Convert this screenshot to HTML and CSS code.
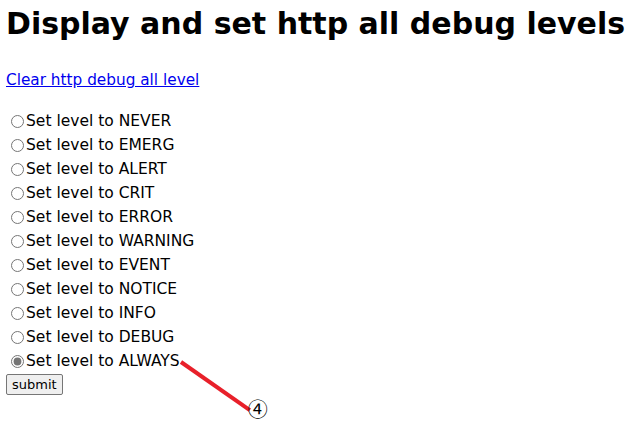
FILE: index.html
```html
<!DOCTYPE html>
<html lang="en">

<head>
  <meta charset="UTF-8">
  <title>Display and set http all debug levels</title>
  <link rel="stylesheet" href="styles.css">
</head>

<body>
  <h1>Display and set http all debug levels</h1>

  <p class="clear"><a href="#">Clear http debug all level</a></p>

  <form class="levels">
    <label class="level"><input type="radio" name="level" value="never">Set level to NEVER</label>
    <label class="level"><input type="radio" name="level" value="emerg">Set level to EMERG</label>
    <label class="level"><input type="radio" name="level" value="alert">Set level to ALERT</label>
    <label class="level"><input type="radio" name="level" value="crit">Set level to CRIT</label>
    <label class="level"><input type="radio" name="level" value="error">Set level to ERROR</label>
    <label class="level"><input type="radio" name="level" value="warning">Set level to WARNING</label>
    <label class="level"><input type="radio" name="level" value="event">Set level to EVENT</label>
    <label class="level"><input type="radio" name="level" value="notice">Set level to NOTICE</label>
    <label class="level"><input type="radio" name="level" value="info">Set level to INFO</label>
    <label class="level"><input type="radio" name="level" value="debug">Set level to DEBUG</label>
    <label class="level">
      <input type="radio" name="level" value="always" checked>Set level to ALWAYS
      <span class="callout">
        <span class="callout-line"></span>
        <span class="callout-num">④</span>
      </span>
    </label>
    <div><button type="button" class="submit">submit</button></div>
  </form>
</body>

</html>
```

FILE: styles.css
```css
* {
  box-sizing: border-box
}

html {
  min-height: 100%
}

body {
  margin: 8px 6px;
  min-height: 421px;
  font-family: "DejaVu Sans", Verdana, sans-serif;
  color: #000;
  background: #fff
}

h1 {
  margin: 0;
  font-size: 30px;
  line-height: 32px;
  font-weight: 700
}

.clear {
  margin: 30px 0 0 0;
  font-size: 15.3px;
  line-height: 20px
}

.clear a {
  color: #0000ee
}

.levels {
  margin-top: 19px;
  display: flex;
  flex-direction: column;
  font-size: 15.5px
}

.level {
  display: flex;
  align-items: center;
  height: 24px;
  position: relative;
  width: max-content
}

.level input {
  width: 13px;
  height: 13px;
  margin: 0 2px 0 5px;
  accent-color: #757575
}

.submit {
  margin-top: 1px;
  font: 13px "DejaVu Sans", Verdana, sans-serif;
  padding: 1px 5px;
  height: 21px;
  background: #efefef;
  border: 1px solid #767676;
  border-radius: 2px
}

.callout {
  position: absolute;
  left: 100%;
  top: 50%
}

.callout-line {
  position: absolute;
  left: 1px;
  top: -1px;
  width: 84px;
  height: 4px;
  background: #e8202a;
  transform-origin: 0 50%;
  transform: rotate(35deg)
}

.callout-num {
  position: absolute;
  left: 68px;
  top: 38px;
  font-family: "Noto Sans CJK JP", sans-serif;
  font-size: 20px;
  line-height: 20px;
  color: #000
}
```
